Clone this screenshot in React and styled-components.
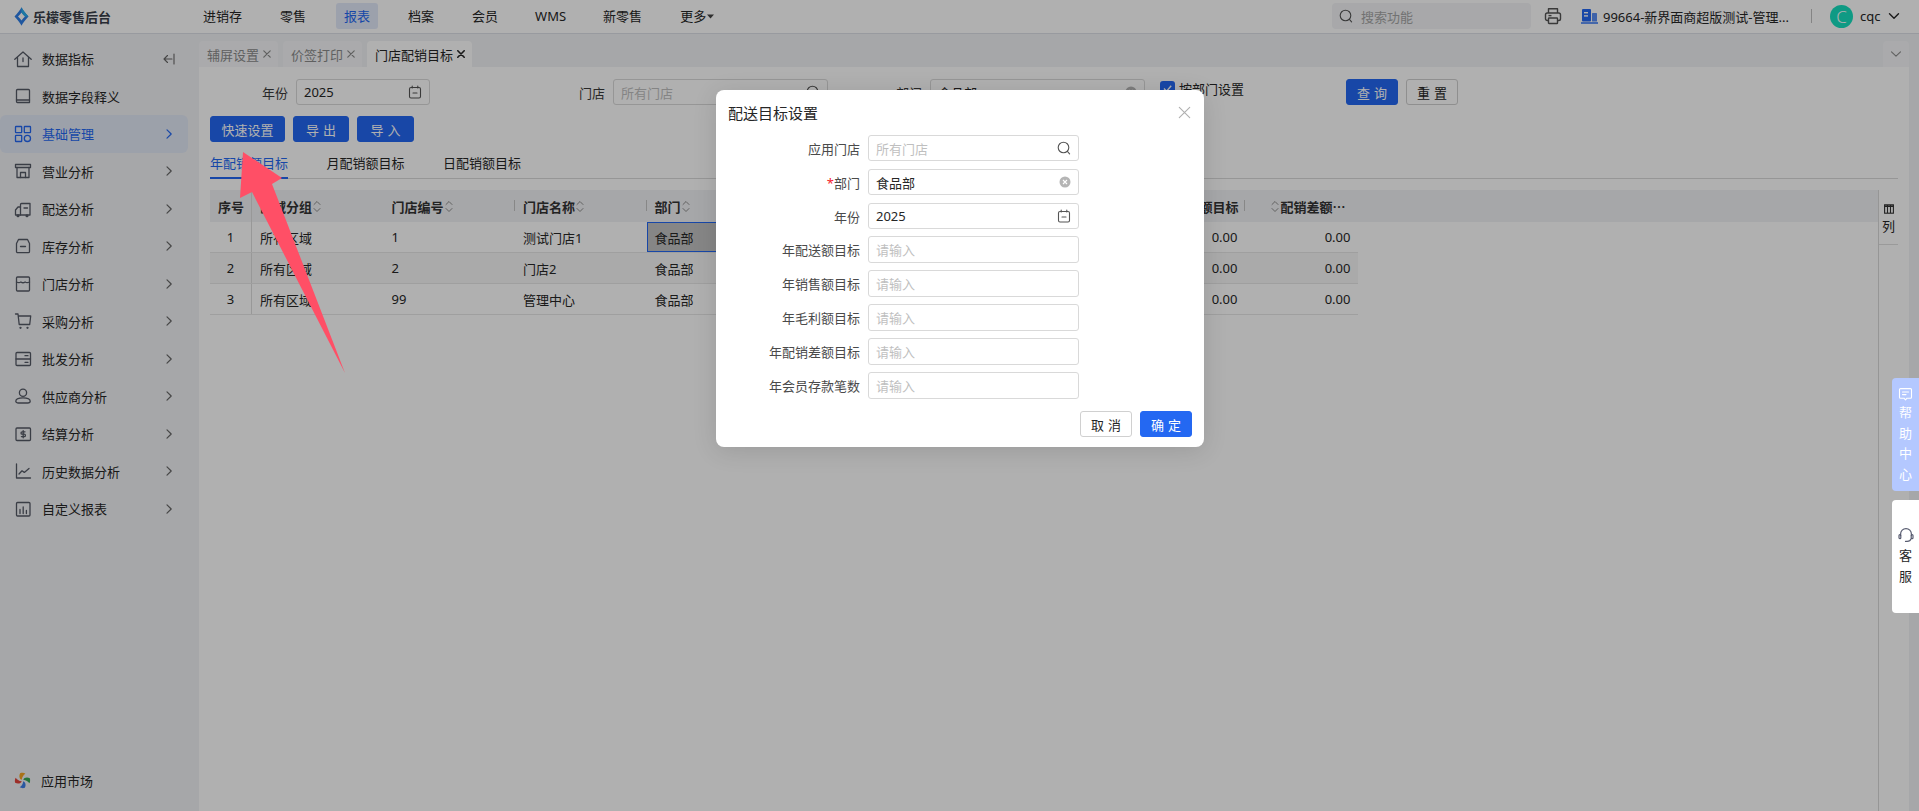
import React from "react";
import styled, { createGlobalStyle } from "styled-components";

const GlobalStyle = createGlobalStyle`
  html, body { margin: 0; padding: 0; height: 100%; overflow: hidden; }
  body {
    font-family: "Noto Sans", "Noto Sans CJK SC", sans-serif;
    font-size: 13px;
    color: #262626;
    background: #f1f2f5;
  }
  #root { height: 100%; }
  * { box-sizing: border-box; }
`;

const Page = styled.div`
  position: relative;
  width: 100%;
  height: 811px;
  display: flex;
  flex-direction: column;
  overflow: hidden;
`;

/* ---------- top bar ---------- */
const TopBar = styled.header`
  height: 34px;
  flex: none;
  display: flex;
  align-items: center;
  background: #fff;
  border-bottom: 1px solid #dcdfe6;
  padding-bottom: 5px;
  padding-top: 4px;
`;
const Brand = styled.div`
  width: 195px;
  padding-left: 14px;
  display: flex;
  align-items: center;
  gap: 4px;
  font-size: 13px;
  font-weight: 700;
  color: #3a3f4a;
  flex: none;
`;
const TopNav = styled.nav`
  display: flex;
  align-items: center;
  width: 1137px;
  flex: none;
`;
const TopNavItem = styled.a`
  height: 26px;
  line-height: 26px;
  padding: 0 8px;
  margin-right: ${(p) => p.$gap || 22}px;
  border-radius: 3px;
  color: ${(p) => (p.$active ? "#2468f2" : "#262626")};
  background: ${(p) => (p.$active ? "#e3eafa" : "transparent")};
  display: flex;
  align-items: center;
  white-space: nowrap;
`;
const SearchBox = styled.div`
  width: 199px;
  height: 26px;
  flex: none;
  border-radius: 4px;
  background: #f3f4f7;
  display: flex;
  align-items: center;
  gap: 8px;
  padding-left: 7px;
  color: #a6a6a6;
  svg { color: #555; }
`;
const PrinterWrap = styled.div`
  margin-left: 13px;
  width: 18px;
  display: flex;
  color: #555;
  flex: none;
`;
const OrgName = styled.div`
  display: flex;
  align-items: center;
  gap: 5px;
  margin-left: 19px;
  width: 209px;
  white-space: nowrap;
  flex: none;
`;
const VLine = styled.div`
  width: 1px;
  height: 14px;
  background: #bfbfbf;
  margin-left: 21px;
  flex: none;
`;
const Avatar = styled.div`
  width: 23px;
  height: 23px;
  border-radius: 50%;
  background: #16e0bf;
  color: #fff;
  font-size: 17px;
  font-weight: 300;
  display: flex;
  align-items: center;
  justify-content: center;
  margin-left: 18px;
  flex: none;
`;
const UserName = styled.span`
  margin-left: 7px;
  font-size: 13px;
`;
const UserCaret = styled.span`
  display: flex;
  margin-left: 8px;
`;

/* ---------- body ---------- */
const Body = styled.div`
  flex: 1;
  display: flex;
  min-height: 0;
`;
const Sidebar = styled.aside`
  width: 199px;
  flex: none;
  display: flex;
  flex-direction: column;
  justify-content: space-between;
  padding: 6px 11px 12px 0;
`;
const SideList = styled.div`
  display: flex;
  flex-direction: column;
`;
const SideItem = styled.div`
  height: 37.5px;
  display: flex;
  align-items: center;
  padding-left: 14px;
  border-radius: 6px;
  gap: 10px;
  color: ${(p) => (p.$active ? "#2468f2" : "#262626")};
  background: ${(p) => (p.$active ? "#e2e9f7" : "transparent")};
  white-space: nowrap;
  svg.main { color: ${(p) => (p.$active ? "#2468f2" : "#555a66")}; flex: none; }
`;
const SideLabel = styled.span`
  flex: 1;
`;
const SideTail = styled.span`
  display: flex;
  width: 12px;
  margin-right: 13px;
  color: ${(p) => (p.$active ? "#2468f2" : "#666")};
`;

const Main = styled.main`
  flex: 1;
  min-width: 0;
  margin-right: 10px;
  display: flex;
  flex-direction: column;
`;
const TabStrip = styled.div`
  height: 33px;
  flex: none;
  padding-top: 7px;
  display: flex;
  align-items: stretch;
  gap: 5px;
  position: relative;
`;
const PageTab = styled.div`
  display: flex;
  align-items: center;
  gap: 4px;
  padding: 0 7px 0 8px;
  border-radius: 4px 4px 0 0;
  background: ${(p) => (p.$active ? "#fff" : "#f6f7f9")};
  color: ${(p) => (p.$active ? "#262626" : "#8c8c8c")};
  white-space: nowrap;
  svg { color: ${(p) => (p.$active ? "#262626" : "#8c8c8c")}; }
`;
const TabMore = styled.div`
  margin-left: auto;
  width: 26px;
  background: #f6f7f9;
  border-radius: 4px 4px 0 0;
  display: flex;
  align-items: center;
  justify-content: center;
  color: #8c8c8c;
`;
const Content = styled.section`
  flex: 1;
  min-height: 0;
  background: #fff;
  display: flex;
  flex-direction: column;
  padding: 12px 11px 0;
`;
const FilterRow = styled.div`
  display: flex;
  height: 26px;
  flex: none;
`;
const Field = styled.div`
  display: flex;
  align-items: center;
  gap: 8px;
`;
const FieldLabel = styled.label`
  width: ${(p) => p.$w}px;
  text-align: right;
  color: #3a3a3a;
  white-space: nowrap;
  flex: none;
`;
const InputBox = styled.div`
  width: ${(p) => p.$w || 211}px;
  height: ${(p) => p.$h || 26}px;
  border: 1px solid #d9d9d9;
  border-radius: 3px;
  background: #fff;
  display: flex;
  align-items: center;
  justify-content: space-between;
  padding: 0 7px;
  flex: none;
  color: ${(p) => (p.$empty ? "#bfbfbf" : "#262626")};
  svg { color: #555; flex: none; }
`;
const CheckField = styled.div`
  display: flex;
  gap: 4px;
  margin-left: 15px;
  height: 18px;
  align-items: center;
`;
const CheckMark = styled.span`
  width: 15px;
  height: 15px;
  border-radius: 3px;
  background: #2468f2;
  color: #fff;
  display: flex;
  align-items: center;
  justify-content: center;
`;
const Btn = styled.button`
  height: 26px;
  width: ${(p) => p.$w}px;
  margin-left: ${(p) => p.$ml || 0}px;
  border-radius: 3px;
  border: 1px solid ${(p) => (p.$plain ? "#d0d0d0" : "#2468f2")};
  background: ${(p) => (p.$plain ? "#fff" : "#2468f2")};
  color: ${(p) => (p.$plain ? "#262626" : "#fff")};
  font: inherit;
  letter-spacing: ${(p) => (p.$wide ? "4px" : "0")};
  padding: 0 0 0 ${(p) => (p.$wide ? "4px" : "0")};
  flex: none;
`;
const ActionRow = styled.div`
  display: flex;
  gap: 8px;
  margin-top: 11px;
  flex: none;
`;
const SubTabs = styled.div`
  display: flex;
  gap: 38.5px;
  height: 37px;
  flex: none;
  border-bottom: 1px solid #d9d9d9;
`;
const SubTab = styled.div`
  display: flex;
  align-items: center;
  padding-top: 6px;
  height: 37px;
  white-space: nowrap;
  color: ${(p) => (p.$active ? "#2468f2" : "#262626")};
  border-bottom: 2px solid ${(p) => (p.$active ? "#2468f2" : "transparent")};
`;

const TableArea = styled.div`
  flex: 1;
  min-height: 0;
  display: flex;
  margin-top: 11px;
`;
const Table = styled.div`
  flex: 1;
  min-width: 0;
`;
const HeadRow = styled.div`
  display: flex;
  height: 32px;
  background: #f1f2f5;
`;
const HeadCell = styled.div`
  width: ${(p) => p.$w}px;
  flex: none;
  position: relative;
  display: flex;
  align-items: center;
  justify-content: ${(p) => (p.$center ? "center" : p.$right ? "flex-end" : "flex-start")};
  gap: 1px;
  padding: 0 ${(p) => (p.$tight ? 13 : 7)}px 0 8px;
  font-weight: 600;
  white-space: nowrap;
  overflow: hidden;
  color: #333;
  border-right: ${(p) => (p.$fixed ? "1px solid #dcdcdc" : "0")};
  &::after {
    content: "";
    display: ${(p) => (p.$sep ? "block" : "none")};
    position: absolute;
    right: 0;
    top: 10px;
    height: 11px;
    width: 1px;
    background: #c4c4c4;
  }
  svg { color: #8c8c8c; flex: none; }
`;
const Row = styled.div`
  display: flex;
  height: 31px;
  width: 1148px;
  border-bottom: 1px solid #e6e6e6;
  background: ${(p) => (p.$hover ? "#f7f7f7" : "#fff")};
`;
const Cell = styled.div`
  width: ${(p) => p.$w}px;
  flex: none;
  display: flex;
  align-items: center;
  justify-content: ${(p) => (p.$center ? "center" : p.$right ? "flex-end" : "flex-start")};
  padding: 0 8px;
  white-space: nowrap;
  overflow: hidden;
  border-right: ${(p) => (p.$fixed ? "1px solid #dcdcdc" : "0")};
  ${(p) => p.$selected && "background:#c2c2c2; border:1px solid #2468f2; padding:0 7px;"}
`;
const ColumnRail = styled.div`
  width: 20px;
  flex: none;
  border-left: 1px solid #d9d9d9;
`;
const RailButton = styled.div`
  height: 55px;
  display: flex;
  flex-direction: column;
  align-items: center;
  padding-top: 14px;
  gap: 3px;
  border-bottom: 1px solid #e0e0e0;
  line-height: 18px;
  svg { color: #333; }
`;

/* ---------- overlay layers ---------- */
const Mask = styled.div`
  position: absolute;
  inset: 0;
  background: rgba(0, 0, 0, 0.31);
`;
const Modal = styled.div`
  position: absolute;
  left: 716px;
  top: 90px;
  width: 488px;
  height: 357px;
  background: #fff;
  border-radius: 8px;
  box-shadow: 0 4px 24px rgba(0, 0, 0, 0.12);
  display: flex;
  flex-direction: column;
  padding: 12px 12px 0;
`;
const ModalHead = styled.div`
  display: flex;
  align-items: center;
  justify-content: space-between;
  height: 20px;
  font-size: 15px;
  color: #262626;
  padding-right: 1px;
  svg { color: #b0b0b0; }
`;
const ModalForm = styled.div`
  display: flex;
  flex-direction: column;
  margin-top: 13px;
`;
const FormRow = styled.div`
  display: flex;
  align-items: center;
  gap: 8px;
  height: ${(p) => p.$h || 34}px;
  padding-bottom: ${(p) => p.$pb ?? 8}px;
`;
const FormLabel = styled.label`
  width: 132px;
  text-align: right;
  color: #4a4a4a;
  white-space: nowrap;
  flex: none;
`;
const Star = styled.span`
  color: #f5222d;
`;
const ModalFoot = styled.div`
  display: flex;
  justify-content: flex-end;
  gap: 8px;
  margin-top: 5px;
`;
const SideDock = styled.div`
  position: absolute;
  right: 0;
  top: 378px;
  width: 27px;
  display: flex;
  flex-direction: column;
  gap: 9px;
`;
const HelpTab = styled.div`
  height: 113px;
  background: #b4c8ff;
  border-radius: 4px 0 0 4px;
  color: #fff;
  display: flex;
  flex-direction: column;
  align-items: center;
  padding-top: 9px;
  line-height: 20.5px;
  font-size: 13px;
`;
const ServiceTab = styled.div`
  height: 113px;
  background: #fff;
  border-radius: 4px 0 0 4px;
  color: #262626;
  display: flex;
  flex-direction: column;
  align-items: center;
  padding-top: 27px;
  line-height: 21px;
  svg { margin-bottom: 1px; }
`;
const ArrowLayer = styled.svg`
  position: absolute;
  left: 0;
  top: 0;
  pointer-events: none;
`;

/* ---------- icons ---------- */
const Ico = ({ children, size = 18, vb = 18, sw = 1.3, className = "main" }) => (
  <svg className={className} width={size} height={size} viewBox={`0 0 ${vb} ${vb}`} fill="none" stroke="currentColor" strokeWidth={sw} strokeLinecap="round" strokeLinejoin="round">
    {children}
  </svg>
);
const Chevron = () => (
  <svg width="12" height="12" viewBox="0 0 12 12" fill="none" stroke="currentColor" strokeWidth="1.2" strokeLinecap="round" strokeLinejoin="round">
    <path d="M4 1.8 8.2 6 4 10.2" />
  </svg>
);
const Collapse = () => (
  <svg width="12" height="12" viewBox="0 0 12 12" fill="none" stroke="currentColor" strokeWidth="1.1" strokeLinecap="round" strokeLinejoin="round">
    <path d="M11 1v10M9 6H1M4.5 2.5 1 6l3.5 3.5" />
  </svg>
);
const sideIcons = {
  home: <><path d="M.8 9.2 9 2l8.2 7.2" /><path d="M3.5 7.5V16.5h11V7.5" /><path d="M9 8v3.5" /></>,
  book: <><path d="M2.5 3.5a1 1 0 0 1 1-1h11a1 1 0 0 1 1 1v12h-12a1 1 0 0 1-1-1z" /><path d="M2.5 13h13" /></>,
  grid: <><rect x="1.5" y="1.5" width="6.2" height="6.2" rx="0.6" /><rect x="10.3" y="1.5" width="6.2" height="6.2" rx="0.6" /><rect x="1.5" y="10.3" width="6.2" height="6.2" rx="0.6" /><rect x="10.3" y="10.3" width="6.2" height="6.2" rx="3.1" /></>,
  shop: <><path d="M1.5 2.5h15v3h-15z" /><path d="M3 5.5v10h12v-10" /><path d="M6.5 15.5v-5h5v5" /></>,
  truck: <><path d="M6.5 4.5a1 1 0 0 1 1-1h8.5v11.5H6.5z" /><path d="M6.5 7H4L1.5 10v5h5" /><path d="M10 8h3.5" /><circle cx="4" cy="15.8" r="0.9" /><circle cx="13" cy="15.8" r="0.9" /></>,
  box: <><path d="M4.5 2.5h9l2 4v8a1.2 1.2 0 0 1-1.2 1.2H3.7a1.2 1.2 0 0 1-1.2-1.2v-8z" /><path d="M6.5 9.5h5" /></>,
  store: <><rect x="2.5" y="2" width="13" height="14" rx="1" /><path d="M2.5 7c2 1 3 1 4.4 0 1.4 1 2.8 1 4.2 0 1.4 1 2.4 1 4.4 0" /></>,
  cart: <><path d="M1.5 2h2.5l1.2 10.5h10.5l1-8.5H4.5" /><circle cx="6.5" cy="15.8" r="0.5" /><circle cx="13.5" cy="15.8" r="0.5" /></>,
  server: <><rect x="2" y="2.5" width="14.5" height="13" rx="1" /><path d="M2 9h14.5M11 5.7h3M11 12.3h3" /></>,
  user: <><circle cx="9" cy="5.8" r="3.6" /><path d="M1.8 14.3c0-2.2 3-3.4 7.2-3.4s7.2 1.2 7.2 3.4c0 1-1.2 1.7-2.5 1.7H4.3c-1.3 0-2.5-.7-2.5-1.7z" /></>,
  money: <><rect x="2" y="3" width="14.5" height="12.5" rx="1" /><path d="M11 6.8H8.2a1.1 1.1 0 0 0 0 2.4h2a1.1 1.1 0 0 1 0 2.4H7.4M9.2 5.6v7.2" /></>,
  chart: <><path d="M2.5 2v14h14" /><path d="M5 12l3-3.2 2.3 1.6L15 6.5" /></>,
  report: <><rect x="2.5" y="2.5" width="13.5" height="13.500" rx="1" /><path d="M6 9.5v4M9.2 7v6.5M12.4 10.5v3" /></>,
};
const AppMarket = () => (
  <svg width="17" height="17" viewBox="0 0 18 18">
    <path d="M8.2 8.2C5.800 7.400 5 4.200 6.500 1.200 8.500.6 10.800 1 12 1.800 10 3 8.600 5.200 8.200 8.200z" fill="#f5a623" />
    <path d="M9.800 8.200C10.600 5.800 13.800 5 16.800 6.500 17.400 8.500 17 10.800 16.200 12 15 10 12.800 8.600 9.800 8.200z" fill="#35a853" />
    <path d="M9.800 9.800C12.200 10.600 13 13.800 11.500 16.800 9.500 17.400 7.200 17 6 16.200 8 15 9.400 12.800 9.800 9.800z" fill="#3d7fe8" />
    <path d="M8.200 9.800C7.400 12.200 4.200 13 1.200 11.500.6 9.500 1 7.200 1.800 6 3 8 5.200 9.400 8.200 9.800z" fill="#e2453c" />
  </svg>
);
const Logo = () => (
  <svg width="15" height="19" viewBox="0 0 15 19">
    <path d="M7.500.3C8.600 2.800 11.400 6 14.500 9.500 11.400 13 8.600 16.200 7.500 18.700 6.400 16.200 3.600 13 .5 9.500 3.600 6 6.400 2.800 7.500.3z" fill="#2f7fe6" />
    <path d="M7.500 5.600C8.300 6.900 9.600 8.300 11 9.500 9.600 10.700 8.300 12.100 7.500 13.400 6.700 12.100 5.400 10.700 4 9.500 5.400 8.300 6.700 6.900 7.500 5.600z" fill="#fff" />
    <path d="M7.500.3C8.600 2.800 11.400 6 14.500 9.500H11C9.600 8.300 8.300 6.900 7.500 5.600z" fill="#2bb0ec" />
  </svg>
);
const SearchIcon = ({ size = 14 }) => (
  <svg width={size} height={size} viewBox="0 0 14 14" fill="none" stroke="currentColor" strokeWidth="1.1" strokeLinecap="round">
    <circle cx="6.5" cy="6.5" r="5.3" />
    <path d="M10.4 10.4 12.6 12.8" />
  </svg>
);
const CalendarIcon = () => (
  <svg width="14" height="14" viewBox="0 0 14 14" fill="none" stroke="currentColor" strokeWidth="1.1" strokeLinecap="round">
    <rect x="1.5" y="2.5" width="11" height="10.5" rx="1.5" />
    <path d="M4.2 1v2M9.8 1v2M5 8h4" />
  </svg>
);
const ClearIcon = () => (
  <svg width="12" height="12" viewBox="0 0 12 12" style={{ color: "#b5b5b5" }}>
    <circle cx="6" cy="6" r="5.5" fill="currentColor" />
    <path d="M4 4l4 4M8 4l-4 4" stroke="#fff" strokeWidth="1.1" />
  </svg>
);
const XIcon = ({ size = 8, sw = 1.2 }) => (
  <svg width={size} height={size} viewBox="0 0 8 8" fill="none" stroke="currentColor" strokeWidth={sw} strokeLinecap="round">
    <path d="M.8.8l6.4 6.4M7.2.8.8 7.2" />
  </svg>
);
const SortIcon = () => (
  <svg width="8" height="13" viewBox="0 0 8 13" fill="none" stroke="currentColor" strokeWidth="1" strokeLinecap="round" strokeLinejoin="round">
    <path d="M1 4.5 4 1.5l3 3M1 8.500l3 3 3-3" />
  </svg>
);
const DownIcon = ({ size = 12, sw = 1.4 }) => (
  <svg width={size} height={size} viewBox="0 0 12 12" fill="none" stroke="currentColor" strokeWidth={sw} strokeLinecap="round" strokeLinejoin="round">
    <path d="M1.5 3.8 6 8.2l4.5-4.4" />
  </svg>
);
const PrinterIcon = () => (
  <svg width="18" height="18" viewBox="0 0 18 18" fill="none" stroke="currentColor" strokeWidth="1.4" strokeLinejoin="round">
    <path d="M4.5 6V1.8h9V6" />
    <rect x="1.5" y="6" width="15" height="7.5" rx="1.8" />
    <rect x="4.5" y="11" width="9" height="5.5" rx="0.6" fill="#fff" />
    <path d="M4.5 8.6h3" />
  </svg>
);
const OrgIcon = () => (
  <svg width="17" height="16" viewBox="0 0 17 16">
    <rect x="1" y="1" width="9" height="12.5" rx="1" fill="#2468f2" />
    <rect x="11" y="5" width="5" height="8.5" rx="0.5" fill="#5b8ff5" />
    <rect x="3" y="4" width="4" height="1.4" fill="#fff" />
    <rect x="3" y="7.2" width="4" height="1.4" fill="#fff" />
    <rect x="0" y="14.3" width="17" height="1.4" fill="#2468f2" />
  </svg>
);
const ColumnsIcon = () => (
  <svg width="10" height="10" viewBox="0 0 10 10" fill="none" stroke="currentColor" strokeWidth="1.1">
    <rect x=".6" y=".8" width="8.8" height="8.4" />
    <path d="M.6 2.2h8.8" strokeWidth="1.6" />
    <path d="M3.5 1v8M6.5 1v8" />
  </svg>
);
const ChatIcon = () => (
  <svg width="15" height="15" viewBox="0 0 15 15" fill="none" stroke="#fff" strokeWidth="1.1" strokeLinejoin="round" strokeLinecap="round">
    <path d="M1.5 2.6a1 1 0 0 1 1-1h10a1 1 0 0 1 1 1v7.6a1 1 0 0 1-1 1H9l-1.5 1.6L6 11.2H2.5a1 1 0 0 1-1-1z" />
    <path d="M4.5 5h6M4.5 7.6h3.5" />
  </svg>
);
const HeadsetIcon = () => (
  <svg width="16" height="17" viewBox="0 0 16 17" fill="none" stroke="#585c70" strokeWidth="1.2" strokeLinecap="round">
    <path d="M2.6 8.5V7a5.4 5.4 0 0 1 10.8 0v1.5" />
    <rect x="1" y="7.6" width="1.8" height="4" rx=".9" />
    <rect x="13.2" y="7.6" width="1.8" height="4" rx=".9" />
    <path d="M13 11.8c-.5 1.8-2 2.6-3.8 2.6H7.5" />
  </svg>
);
const CheckIcon = () => (
  <svg width="11" height="11" viewBox="0 0 11 11" fill="none" stroke="currentColor" strokeWidth="1.4">
    <path d="M2 5.6 4.6 8.2 9.2 2.8" />
  </svg>
);

/* ---------- data ---------- */
const topNav = [
  { t: "进销存", g: 22 },
  { t: "零售", g: 22 },
  { t: "报表", a: true, g: 22 },
  { t: "档案", g: 22 },
  { t: "会员", g: 21 },
  { t: "WMS", g: 21 },
  { t: "新零售", g: 22 },
];
const sideItems = [
  ["home", "数据指标", "collapse"],
  ["book", "数据字段释义", ""],
  ["grid", "基础管理", "chev", true],
  ["shop", "营业分析", "chev"],
  ["truck", "配送分析", "chev"],
  ["box", "库存分析", "chev"],
  ["store", "门店分析", "chev"],
  ["cart", "采购分析", "chev"],
  ["server", "批发分析", "chev"],
  ["user", "供应商分析", "chev"],
  ["money", "结算分析", "chev"],
  ["chart", "历史数据分析", "chev"],
  ["report", "自定义报表", "chev"],
];
const cols = [42, 131.5, 131.5, 131.5, 131.5, 116.9, 116.9, 116.9, 116.8, 113];
const rows = [
  ["1", "所有区域", "1", "测试门店1", "食品部"],
  ["2", "所有区域", "2", "门店2", "食品部"],
  ["3", "所有区域", "99", "管理中心", "食品部"],
];
const heads = ["配送额目标", "销售额目标", "毛利额目标", "配销额目标"];
const numericFields = ["年配送额目标", "年销售额目标", "年毛利额目标", "年配销差额目标", "年会员存款笔数"];

export default function App() {
  return (
    <Page lang="zh-CN">
      <GlobalStyle />
      <TopBar>
        <Brand>
          <Logo />
          <span>乐檬零售后台</span>
        </Brand>
        <TopNav>
          {topNav.map((n) => (
            <TopNavItem key={n.t} $active={n.a} $gap={n.g}>{n.t}</TopNavItem>
          ))}
          <TopNavItem>
            更多
            <svg width="7" height="5" viewBox="0 0 7 5" style={{ marginLeft: 1 }}><path d="M0 .5h7L3.5 4.5z" fill="#444" /></svg>
          </TopNavItem>
        </TopNav>
        <SearchBox>
          <SearchIcon />
          <span>搜索功能</span>
        </SearchBox>
        <PrinterWrap><PrinterIcon /></PrinterWrap>
        <OrgName>
          <OrgIcon />
          <span>99664-新界面商超版测试-管理...</span>
        </OrgName>
        <VLine />
        <Avatar>C</Avatar>
        <UserName>cqc</UserName>
        <UserCaret><DownIcon /></UserCaret>
      </TopBar>
      <Body>
        <Sidebar>
          <SideList>
            {sideItems.map(([ic, label, tail, active]) => (
              <SideItem key={label} $active={active}>
                <Ico>{sideIcons[ic]}</Ico>
                <SideLabel>{label}</SideLabel>
                <SideTail $active={active}>
                  {tail === "chev" && <Chevron />}
                  {tail === "collapse" && <Collapse />}
                </SideTail>
              </SideItem>
            ))}
          </SideList>
          <SideItem>
            <AppMarket />
            <SideLabel>应用市场</SideLabel>
          </SideItem>
        </Sidebar>
        <Main>
          <TabStrip>
            <PageTab>辅屏设置<XIcon /></PageTab>
            <PageTab>价签打印<XIcon /></PageTab>
            <PageTab $active>门店配销目标<XIcon sw={1.6} /></PageTab>
            <TabMore><DownIcon sw={1.1} /></TabMore>
          </TabStrip>
          <Content>
            <FilterRow>
              <Field>
                <FieldLabel $w={78}>年份</FieldLabel>
                <InputBox $w={134}>2025<CalendarIcon /></InputBox>
              </Field>
              <Field>
                <FieldLabel $w={175}>门店</FieldLabel>
                <InputBox $w={215} $empty>所有门店<SearchIcon /></InputBox>
              </Field>
              <Field>
                <FieldLabel $w={94}>部门</FieldLabel>
                <InputBox $w={215}>食品部<ClearIcon /></InputBox>
              </Field>
              <CheckField>
                <CheckMark><CheckIcon /></CheckMark>
                按部门设置
              </CheckField>
              <Btn $w={52} $ml={102} $wide>查询</Btn>
              <Btn $w={52} $ml={8} $plain $wide>重置</Btn>
            </FilterRow>
            <ActionRow>
              <Btn $w={75}>快速设置</Btn>
              <Btn $w={56} $wide>导出</Btn>
              <Btn $w={57} $wide>导入</Btn>
            </ActionRow>
            <SubTabs>
              <SubTab $active>年配销额目标</SubTab>
              <SubTab>月配销额目标</SubTab>
              <SubTab>日配销额目标</SubTab>
            </SubTabs>
            <TableArea>
              <Table>
                <HeadRow>
                  <HeadCell $w={cols[0]} $center $fixed>序号</HeadCell>
                  <HeadCell $w={cols[1]}>区域分组<SortIcon /></HeadCell>
                  <HeadCell $w={cols[2]} $sep>门店编号<SortIcon /></HeadCell>
                  <HeadCell $w={cols[3]} $sep>门店名称<SortIcon /></HeadCell>
                  <HeadCell $w={cols[4]} $sep>部门<SortIcon /></HeadCell>
                  {heads.map((h, i) => (
                    <HeadCell key={h} $w={cols[5 + i]} $right $sep><SortIcon />{h}</HeadCell>
                  ))}
                  <HeadCell $w={cols[9]} $right $tight><SortIcon />配销差额⋯</HeadCell>
                </HeadRow>
                {rows.map((r, ri) => (
                  <Row key={r[0]} $hover={ri === 1}>
                    <Cell $w={cols[0]} $center $fixed>{r[0]}</Cell>
                    <Cell $w={cols[1]}>{r[1]}</Cell>
                    <Cell $w={cols[2]}>{r[2]}</Cell>
                    <Cell $w={cols[3]}>{r[3]}</Cell>
                    <Cell $w={cols[4]} $selected={ri === 0}>{r[4]}</Cell>
                    {cols.slice(5).map((w, ci) => (
                      <Cell key={ci} $w={w} $right>0.00</Cell>
                    ))}
                  </Row>
                ))}
              </Table>
              <ColumnRail>
                <RailButton>
                  <ColumnsIcon />
                  <span>列</span>
                </RailButton>
              </ColumnRail>
            </TableArea>
          </Content>
        </Main>
      </Body>

      <Mask />
      <Modal>
        <ModalHead>
          <span>配送目标设置</span>
          <XIcon size={13} sw={0.7} />
        </ModalHead>
        <ModalForm>
          <FormRow>
            <FormLabel>应用门店</FormLabel>
            <InputBox $empty>所有门店<SearchIcon /></InputBox>
          </FormRow>
          <FormRow>
            <FormLabel><Star>*</Star>部门</FormLabel>
            <InputBox>食品部<ClearIcon /></InputBox>
          </FormRow>
          <FormRow $h={33} $pb={7}>
            <FormLabel>年份</FormLabel>
            <InputBox>2025<CalendarIcon /></InputBox>
          </FormRow>
          {numericFields.map((f) => (
            <FormRow key={f} $pb={7}>
              <FormLabel>{f}</FormLabel>
              <InputBox $h={27} $empty>请输入</InputBox>
            </FormRow>
          ))}
        </ModalForm>
        <ModalFoot>
          <Btn $w={52} $plain $wide>取消</Btn>
          <Btn $w={52} $wide>确定</Btn>
        </ModalFoot>
      </Modal>
      <SideDock>
        <HelpTab>
          <ChatIcon />
          <span>帮</span><span>助</span><span>中</span><span>心</span>
        </HelpTab>
        <ServiceTab>
          <HeadsetIcon />
          <span>客</span><span>服</span>
        </ServiceTab>
      </SideDock>
      <ArrowLayer width="400" height="400" viewBox="0 0 400 400">
        <polygon points="243,152 282,178 272,184 345,373 252,192 240,198" fill="#ff4f66" />
      </ArrowLayer>
    </Page>
  );
}
